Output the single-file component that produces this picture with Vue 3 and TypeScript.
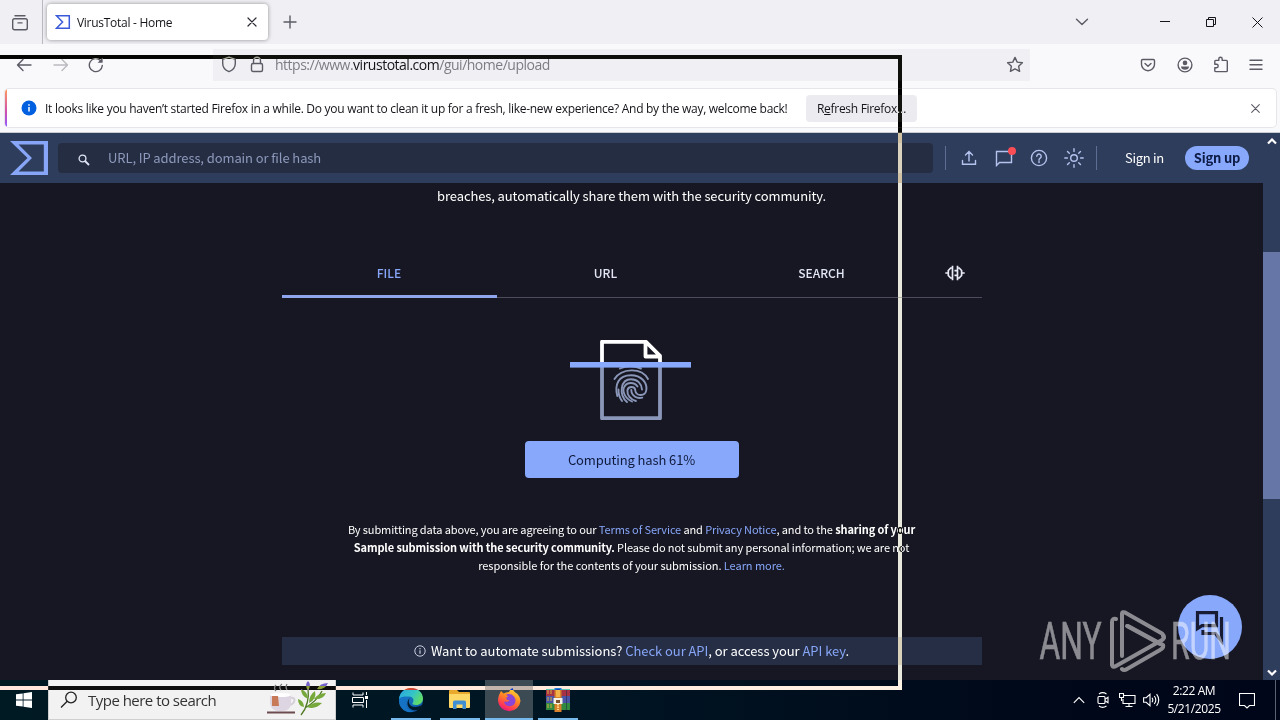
<script setup lang="ts">
interface TaskApp {
  id: string
  active: boolean
}

const tabs: string[] = ['FILE', 'URL', 'SEARCH']
const apps: TaskApp[] = [
  { id: 'edge', active: false },
  { id: 'files', active: false },
  { id: 'firefox', active: true },
  { id: 'winrar', active: false },
]
const progress = 61
</script>

<template>
  <div class="screen">
    <header class="titlebar">
      <div class="view-btn">
        <svg width="18" height="18" viewBox="0 0 18 18" class="line"><path d="M4 1.800h10M3.500 4.700h11a1.800 1.800 0 0 1 1.800 1.800v7.400a1.800 1.800 0 0 1-1.800 1.800h-11a1.800 1.800 0 0 1-1.800-1.800V6.500a1.800 1.800 0 0 1 1.800-1.800zM7 8.900h4" /></svg>
      </div>
      <div class="tab">
        <svg width="16" height="16" viewBox="0 0 16 16"><path d="M1.500 1.700h12.800v12.600H1.500L7.600 8z" fill="none" stroke="#3a5bd9" stroke-width="1.500" /></svg>
        <span class="tab-title">VirusTotal - Home</span>
        <svg class="line tab-close" width="10" height="10" viewBox="0 0 10 10"><path d="M1 1l8 8M9 1L1 9" /></svg>
      </div>
      <svg class="line plus" width="14" height="14" viewBox="0 0 14 14"><path d="M7 1v12M1 7h12" /></svg>
      <div class="window-controls">
        <svg class="line" width="14" height="8" viewBox="0 0 14 8"><path d="M1.500 1.200L7 6.500l5.500-5.300" /></svg>
        <svg class="sharp" width="10" height="10" viewBox="0 0 10 10"><path d="M0 4.500h10" /></svg>
        <svg class="sharp" width="10" height="10" viewBox="0 0 10 10"><path d="M.5 2.500h7v7h-7zM2.500 2.500v-2h7v7h-2" /></svg>
        <svg class="sharp" width="11" height="11" viewBox="0 0 11 11"><path d="M.5.5l10 10M10.500.5l-10 10" /></svg>
      </div>
    </header>

    <div class="toolbar">
      <svg class="line back" width="16" height="14" viewBox="0 0 16 14"><path d="M15 7H1.500M7 1.500L1.500 7 7 12.500" /></svg>
      <svg class="line forward" width="16" height="14" viewBox="0 0 16 14"><path d="M1 7h13.500M9 1.500L14.500 7 9 12.500" /></svg>
      <svg class="line reload" width="16" height="16" viewBox="0 0 16 16"><path d="M14.300 8.500A6.500 6.500 0 1 1 12.400 3.500" /><path d="M14.600 .8v5H9.600z" fill="#5b5b66" stroke="none" /></svg>
      <div class="address">
        <svg class="line" width="16" height="17" viewBox="0 0 16 17"><path d="M8 1.200L14.300 3.400v4.100c0 3.800-2.300 6.600-6.300 8.200C4 14.100 1.700 11.300 1.700 7.500V3.400z" /></svg>
        <svg class="line lock" width="14" height="17" viewBox="0 0 14 17"><rect x="1.500" y="7.500" width="11" height="8" rx="1.500" /><path d="M3.500 7.500V4.700a3.500 3.500 0 0 1 7 0v2.800" /></svg>
        <span class="url">https://www.<b>virustotal.com</b>/gui/home/upload</span>
        <svg class="line star" width="18" height="17" viewBox="0 0 18 17"><path d="M9 1.400l2.200 4.700 5.200.6-3.800 3.500 1 5.100L9 12.800l-4.600 2.500 1-5.100L1.600 6.700l5.200-.6z" /></svg>
      </div>
      <div class="tool-icons">
        <svg class="line" width="16" height="16" viewBox="0 0 16 16"><path d="M2.700 2.500h10.600a1.200 1.200 0 0 1 1.200 1.200v3.500a6.500 6.500 0 0 1-13 0V3.700a1.200 1.200 0 0 1 1.200-1.200zM5 6.500l3 2.800 3-2.800" /></svg>
        <svg class="line" width="16" height="16" viewBox="0 0 16 16"><circle cx="8" cy="8" r="6.900" /><circle cx="8" cy="5.900" r="2.300" fill="#5b5b66" stroke="none" /><path d="M4 9.500h8c0 2.300-1.800 3.300-4 3.300s-4-1-4-3.300z" fill="#5b5b66" stroke="none" /></svg>
        <svg class="line" width="16" height="17" viewBox="0 0 16 17"><path d="M1.800 6V5.200q0-.8.8-.8h3.200V3a1.700 1.700 0 0 1 3.400 0v1.400h4.200q.9 0 .9.900v9.400q0 .9-.9.900H2.700q-.9 0-.9-.9v-3h1.700a1.700 1.700 0 0 0 0-3.400H1.800z" /></svg>
        <svg class="line" width="14" height="12" viewBox="0 0 14 12"><path d="M1 1.300h12M1 5.800h12M1 10.300h12" /></svg>
      </div>
    </div>

    <div class="notice-strip">
      <div class="notice">
        <svg class="info" width="16" height="16" viewBox="0 0 16 16"><circle cx="8" cy="8" r="7.500" fill="#0060df" /><path d="M8 7v4.500M8 4.200v1.500" stroke="#fff" stroke-width="1.500" /></svg>
        <span class="notice-text">It looks like you haven’t started Firefox in a while. Do you want to clean it up for a fresh, like-new experience? And by the way, welcome back!</span>
        <button class="refresh" type="button">R<u>e</u>fresh Firefox…</button>
        <svg class="line notice-close" width="9" height="9" viewBox="0 0 9 9"><path d="M.7.7l7.600 7.600M8.300.7L.7 8.300" /></svg>
      </div>
    </div>

    <div class="viewport">
      <main class="page">
        <nav class="nav">
          <svg class="logo" width="38" height="34" viewBox="0 0 38 34"><path fill-rule="evenodd" d="M0 0H38V34H0L17.500 17zM8.500 3.500L22 17 8.500 30.500H33.800V3.500z" fill="#87a6f8" /></svg>
          <div class="search">
            <svg width="12" height="12" viewBox="0 0 12 12"><circle cx="4.500" cy="4.500" r="3.400" fill="none" stroke="#dfe5f5" stroke-width="1.300" /><path d="M7 7l4 4" stroke="#dfe5f5" stroke-width="1.800" /></svg>
            <span class="search-hint">URL, IP address, domain or file hash</span>
          </div>
          <div class="nav-actions">
            <svg width="16" height="16" viewBox="0 0 16 16"><path d="M8 11V2M4.500 5L8 1.600 11.500 5M1.500 10.500v3.700h13v-3.700" /></svg>
            <span class="chat">
              <svg width="18" height="17" viewBox="0 0 18 17"><path d="M1.500 1.500h15v11H4.500l-3 3z" /></svg>
              <i class="dot"></i>
            </span>
            <svg width="18" height="18" viewBox="0 0 18 18"><circle cx="9" cy="9" r="7.600" /><path d="M6.800 7.200a2.200 2.200 0 1 1 3.400 1.900q-1.200.8-1.200 1.900M9 12.200v1.400" /></svg>
            <svg width="20" height="20" viewBox="0 0 20 20"><circle cx="10" cy="10" r="3.300" /><path d="M10 .8v2.600M10 16.600v2.600M.8 10h2.600M16.600 10h2.600M3.500 3.500l1.800 1.800M14.700 14.700l1.800 1.800M3.500 16.500l1.800-1.800M14.700 5.300l1.800-1.800" /></svg>
          </div>
          <a class="sign-in">Sign in</a>
          <a class="sign-up"><span>Sign up</span></a>
        </nav>

        <section class="content">
          <p class="tagline">breaches, automatically share them with the security community.</p>

          <div class="tabs">
            <div v-for="(t, i) in tabs" :key="t" class="tab-item" :class="{ selected: i === 0 }">{{ t }}</div>
            <div class="tab-icon">
              <svg width="20" height="16" viewBox="0 0 20 16"><path d="M7.500 .8v14.400M7 3H5.700L3.300 5.500v5L5.700 13H7M.3 8h3M12.500 .8v14.400M12.500 3h1.700l2.400 2.500v5L14.200 13h-1.700M16.700 8h3M9.500 5.700h3M9.500 10.300h3" /></svg>
            </div>
          </div>

          <svg class="scan" width="122" height="80" viewBox="0 0 122 80" fill="none">
            <path d="M32 24V78.200H90V24" stroke="#8a97b8" stroke-width="3.800" stroke-linejoin="round" />
            <path d="M32 24V1.800H76L90 15.800V24M75.500 1.800V16.500H90" stroke="#fff" stroke-width="3.800" stroke-linejoin="round" />
            <g stroke="#8a97b8" stroke-width="1.900" stroke-linecap="round">
              <path d="M50 28.500c6-2.600 14-2.600 21 0" />
              <path d="M44.500 39c7-11 27-12 33.500 0" />
              <path d="M47.300 56C44.500 45 48 35.200 61 35.200c10.500 0 16 7.300 15.400 14.300-.7 7.300-10.700 7.300-11.200.5-.2-4-7-4.300-7.800.3-.5 4.700 3.200 9.200 8.500 10.700" />
              <path d="M57 62C48.500 54.500 50.500 39.200 61 39.200c6.500 0 10.500 4.500 11 10.300" />
              <path d="M61.300 50c0 5.500 5.500 9.200 11 7.600" />
              <path d="M62 61.500C54 58 52 50 54.500 46.500c2.500-4.600 10-4.800 13 0" />
              <path d="M52 61c-2.500-3.500-3.800-7-3.500-11.500" />
            </g>
            <rect x="0" y="22" width="121" height="5.600" fill="#87a8fb" />
          </svg>

          <button class="compute" type="button">Computing hash {{ progress }}%</button>

          <div class="legal">
            <p class="l1">By submitting data above, you are agreeing to our <a>Terms of Service</a> and <a>Privacy Notice</a>, and to the <b>sharing of your</b></p>
            <p class="l2"><b>Sample submission with the security community.</b> Please do not submit any personal information; we are not</p>
            <p class="l3">responsible for the contents of your submission. <a>Learn more.</a></p>
          </div>

          <div class="api">
            <svg width="12" height="12" viewBox="0 0 12 12"><circle cx="6" cy="6" r="5.200" fill="none" stroke="#c8cede" /><path d="M6 5.200v3.600M6 3v1.200" stroke="#c8cede" stroke-width="1.200" /></svg>
            <span class="api-text">Want to automate submissions? <a>Check our API</a>, or access your <a>API key</a>.</span>
          </div>
        </section>
      </main>
      <aside class="scrollbar">
        <svg width="10" height="7" viewBox="0 0 10 7"><path d="M1 5.500l4-4 4 4" /></svg>
        <div class="thumb"></div>
        <svg width="10" height="7" viewBox="0 0 10 7"><path d="M1 1.500l4 4 4-4" /></svg>
      </aside>
    </div>

    <footer class="taskbar">
      <div class="start">
        <svg width="16" height="16" viewBox="0 0 16 16"><path d="M0 2.300L6.700 1.400v6.200H0zM7.500 1.300L16 0v7.600H7.500zM0 8.400h6.700v6.200L0 13.700zM7.500 8.400H16V16l-8.500-1.300z" fill="#fff" /></svg>
      </div>
      <div class="task-search">
        <svg width="18" height="18" viewBox="0 0 18 18"><circle cx="11" cy="6.500" r="5.300" fill="none" stroke="#222" stroke-width="1.300" /><path d="M7.200 10.300L1 16.500" stroke="#222" stroke-width="1.300" /></svg>
        <span class="task-hint">Type here to search</span>
        <svg class="art" width="64" height="38" viewBox="0 0 64 38">
          <path d="M9 10q-3-3 0-6M14 9q-3-3 1-6M20 9q-2-3 0-6" stroke="#777" stroke-width="1.200" fill="none" />
          <path d="M23 17q6-1 4 4-2 3-5 3" fill="none" stroke="#d5cfda" stroke-width="2" />
          <path d="M3 14q10-2 21 0v9q-1 7-8 7h-5q-6 0-8-7z" fill="#ddd6e2" />
          <ellipse cx="13.500" cy="14" rx="10.500" ry="2" fill="#fff" />
          <path d="M5 15h6l1 10H5z" fill="#c87958" />
          <path d="M0 30.500h28v2H0z" fill="#6b4a50" />
          <path d="M34 34q9-11 7-27M38 27q12-7 17-17" fill="none" stroke="#507a25" stroke-width="1.300" />
          <path d="M37 26q-6-1-6-8 6 2 6 8zM41 18q-7-3-7-10 7 3 7 10zM42 22q0-8 6-12 2 8-6 12zM40 26q7-6 15-4-7 7-15 4zM47 18q4-6 12-6-3 7-12 6z" fill="#76a83b" />
          <path d="M41 9q-4-5 0-9 4 4 0 9zM50 8q3-6 11-6-3 7-11 6z" fill="#7460c8" />
        </svg>
      </div>
      <div class="task-view">
        <svg width="17" height="16" viewBox="0 0 17 16" fill="none" stroke="#fff"><path d="M1 .5v2.500h10V.5M1 15.500V13h10v2.500M.5 5.500h11v5H.5zM14.500 0v3M14.500 8v8" /><path d="M13 4h3v3h-3z" fill="#fff" stroke="none" /></svg>
      </div>
      <div class="apps">
        <div v-for="app in apps" :key="app.id" class="app" :class="{ active: app.active }">
          <svg v-if="app.id === 'edge'" width="26" height="26" viewBox="0 0 26 26">
            <defs>
              <linearGradient id="edgeTop" x1="0" y1="0" x2="1" y2=".5"><stop offset="0" stop-color="#2aa5df" /><stop offset=".6" stop-color="#35c4c8" /><stop offset="1" stop-color="#5fdb6a" /></linearGradient>
              <linearGradient id="edgeLow" x1="0" y1="0" x2="1" y2="1"><stop offset="0" stop-color="#1c8bd8" /><stop offset="1" stop-color="#0c4ea0" /></linearGradient>
            </defs>
            <circle cx="13" cy="13" r="12" fill="url(#edgeLow)" />
            <path d="M1 12C2 5 7 1 13 1c7 0 12 5 12 10.500 0 4-3 6.500-7 6.500-3 0-4-1-3.500-2 2-2 1-6.500-3.500-6.500C6 9.500 2 10 1 12z" fill="url(#edgeTop)" />
            <path d="M12 11c-3 4 0 9 5 9 3 0 6-1 7.500-2.500l.8 0-.8 3.500-3 1.500c-5 2-11 0-12-5-.3-3 .5-5 2.500-6.500z" fill="#001a2a" />
            <path d="M9.500 10.500C5 16 9 24.500 16 24.600c-8 2.500-15-3-15-11 1-3 5-5 8.500-3.100z" fill="#1672c4" />
          </svg>
          <svg v-else-if="app.id === 'files'" width="24" height="22" viewBox="0 0 24 22">
            <path d="M1 2q0-1 1-1h7l2 2h10q1 0 1 1v3H1z" fill="#e8a92c" />
            <path d="M1 5h21v13q0 1-1 1H2q-1 0-1-1z" fill="#ffd968" />
            <path d="M5 20v-7q0-1.500 1.500-1.500h10Q18 11.500 18 13v7h-3.500v-4.500h-6V20z" fill="#3f8fd2" />
          </svg>
          <svg v-else-if="app.id === 'firefox'" width="24" height="24" viewBox="0 0 24 24">
            <defs><linearGradient id="fox" x1=".8" y1="0" x2=".3" y2="1"><stop offset="0" stop-color="#ffdf3c" /><stop offset=".45" stop-color="#ff8a22" /><stop offset=".8" stop-color="#ff3a52" /><stop offset="1" stop-color="#e31587" /></linearGradient></defs>
            <path d="M2 7l2-4 2.500 2.500Q9 4 12 4q1-3 3.500-4 .5 3 3.500 5l1.500 1Q23.500 9 23.500 13A11.300 11.300 0 0 1 1 13q0-3.500 1-6z" fill="url(#fox)" />
            <path d="M9 6.500q5-1.500 8 2 3 4.500 0 8-3.500 3-7.500 1-3-2-2-4 3 1 5-1-3-.5-3.500-2.500.5-1 2-1.500-1-1-2-2z" fill="#8a45d6" />
          </svg>
          <svg v-else width="24" height="24" viewBox="0 0 24 24">
            <path d="M0 1h24v7H0z" fill="#a63245" /><path d="M0 8h24v7H0z" fill="#4a55a8" /><path d="M0 15h24v7H0z" fill="#318a42" />
            <path d="M2 2v20M5 2v20" stroke="#d6b13c" stroke-width="1" stroke-dasharray="4 3" /><path d="M20.500 2v20" stroke="#1c2440" stroke-opacity=".5" />
            <path d="M8.500 0h7v24h-7z" fill="#d9822b" /><path d="M10 1h4v8h-4z" fill="#f2b34a" />
            <path d="M7.500 10h9v6h-9z" fill="#f4f1e6" /><path d="M10 12h4v3h-4z" fill="#7a5230" /><path d="M12 16v6" stroke="#ffd98a" stroke-width="2" stroke-dasharray="1.500 1" />
          </svg>
        </div>
      </div>
      <div class="tray">
        <svg width="12" height="8" viewBox="0 0 12 8"><path d="M.8 6.800L6 1.600l5.200 5.200" /></svg>
        <svg width="12" height="16" viewBox="0 0 12 16"><rect x="1" y="4.500" width="7" height="7" rx="1" /><path d="M8 7.300l3-2v5.400l-3-2M2 2Q5.500-.7 9.500 2M2 14q3.500 2.700 7.500 0" /></svg>
        <svg width="17" height="15" viewBox="0 0 17 15"><path d="M5 2.500h11v8H4V6M10 10.500V13M6.500 13.500h7M.5.5h4v4h-4zM2.500 4.500V8" /></svg>
        <svg width="17" height="14" viewBox="0 0 17 14"><path d="M.6 4.700h2.600L7 1.300v11.400L3.200 9.300H.6zM9 4.800q1.600 2.200 0 4.400M11.300 3q3 4 0 8M13.600 1.200q4.300 5.800 0 11.600" /></svg>
        <div class="clock"><span class="time">2:22 AM</span><span class="date">5/21/2025</span></div>
        <svg width="16" height="16" viewBox="0 0 16 16"><path d="M.5.5h15v12h-5L8 15l-2.500-2.500h-5z" /></svg>
        <i class="desktop-edge"></i>
      </div>
    </footer>

    <div class="fab">
      <svg width="32" height="36" viewBox="0 0 32 36"><path d="M3.500 3.700h19v13H8L3.500 19.500zM27.500 8v24l-6-7.500H9V21" fill="none" stroke="#171b33" stroke-width="3.200" /></svg>
    </div>

    <svg class="watermark" width="204" height="64" viewBox="0 0 204 64">
      <text x="0.500" y="50" textLength="62" lengthAdjust="spacingAndGlyphs">ANY</text>
      <g fill="none" stroke="#fff" stroke-width="4" stroke-linejoin="round" stroke-linecap="round">
        <path d="M83 47V4.500q0-2 3-1L123 24.500q2 2 2 4" />
        <path d="M88 17l33 18M77 10q-4-1-4 3v43q1 3 4 1l46-26q3-2 1-4" />
        <path d="M83 60q2 2 5 0l33-19q4-2 3-5L89 17" />
      </g>
      <text x="132" y="50" textLength="60" lengthAdjust="spacingAndGlyphs">RUN</text>
    </svg>

    <div class="drag-frame"></div>
  </div>
</template>

<style>
html,
body {
  margin: 0;
  overflow: hidden;
}
</style>

<style scoped>
.screen {
  position: relative;
  width: 1280px;
  height: 720px;
  overflow: hidden;
  display: flex;
  flex-direction: column;
  isolation: isolate;
  background: #171723;
  font-family: "Open Sans", "Noto Sans", sans-serif;
  color: #15141a;
}
.screen * { box-sizing: border-box; }
svg { flex: none; display: block; }
p { margin: 0; }
button { border: 0; padding: 0; font-family: inherit; color: inherit; }
.line { fill: none; stroke: #5b5b66; stroke-width: 1.4; stroke-linecap: round; stroke-linejoin: round; }
.sharp { fill: none; stroke: #15141a; stroke-width: 1; }

.titlebar { height: 44px; flex: none; display: flex; background: #f0f0f4; }
.view-btn { width: 43px; height: 44px; padding: 14px 0 0 11px; border-right: 1px solid #b9b9c2; }
.tab {
  width: 221px;
  height: 36px;
  margin: 4px 0 0 4px;
  padding: 0 11px 0 8px;
  display: flex;
  align-items: center;
  background: #fff;
  border-radius: 4px;
  box-shadow: 0 0 4px rgba(0, 0, 0, 0.4);
}
.tab-title { margin-left: 6px; font-size: 12px; letter-spacing: -0.28px; white-space: nowrap; }
.tab-close { margin-left: auto; stroke: #2b2a33; stroke-width: 1.2; }
.plus { margin: 15px 0 0 15px; }
.window-controls { margin-left: auto; padding: 0 17px 0 0; display: flex; align-items: center; }
.window-controls svg:nth-child(2) { margin-left: 71px; }
.window-controls svg:nth-child(3) { margin-left: 36px; }
.window-controls svg:nth-child(4) { margin-left: 36px; }

.toolbar { height: 44px; flex: none; display: flex; align-items: center; padding-bottom: 3px; background: #f9f9fb; }
.back { margin-left: 16px; }
.forward { margin-left: 21px; opacity: 0.4; }
.reload { margin-left: 19px; }
.address {
  width: 817px;
  height: 32px;
  margin: 0 0 0 109px;
  padding: 0 6px 0 8px;
  display: flex;
  align-items: center;
  background: #f0f0f4;
}
.lock { margin-left: 13px; }
.url { margin-left: 11px; font-size: 14px; letter-spacing: -0.49px; color: #7c7c85; white-space: nowrap; }
.url b { font-weight: 400; color: #15141a; }
.star { margin-left: auto; }
.tool-icons { margin-left: auto; padding-right: 17px; display: flex; align-items: center; gap: 20px; }
.tool-icons svg:first-child { margin-right: 1px; }

.notice-strip { height: 45px; flex: none; padding: 1px 4px 6px 5px; background: #f9f9fb; border-bottom: 1px solid #c9cbd2; }
.notice {
  position: relative;
  height: 38px;
  display: flex;
  align-items: center;
  padding: 0 16px 0 16px;
  border-radius: 4px;
  overflow: hidden;
  background: #fff;
  box-shadow: 0 0 0 1px #e6e6ea;
}
.notice-strip .notice::before {
  content: "";
  position: absolute;
  left: 0;
  top: 0;
  width: 2px;
  height: 38px;
  background: linear-gradient(#ff9a5c, #d04fb0 60%, #9059ff);
}
.notice-text { width: 742px; margin-left: 8px; font-size: 12px; letter-spacing: -0.279px; white-space: nowrap; }
.refresh { width: 111px; height: 27px; margin-left: 19px; background: #ececf0; border-radius: 4px; font-size: 12px; letter-spacing: -0.3px; white-space: nowrap; }
.notice-close { margin-left: auto; stroke-width: 1.1; }

.viewport { flex: 1; min-height: 0; display: flex; font-family: "Noto Sans CJK SC", "Noto Sans", sans-serif; color: #fff; }
.page { width: 1263px; flex: none; display: flex; flex-direction: column; }
.nav { height: 50px; flex: none; display: flex; align-items: center; padding-left: 10px; background: #2f3d5c; white-space: nowrap; }
.search { width: 875px; height: 30px; margin-left: 10px; padding-left: 20px; display: flex; align-items: center; background: #252d43; border-radius: 4px; }
.search svg { margin-top: 3px; }
.search-hint { margin-left: 18px; font-size: 13px; letter-spacing: -0.1px; line-height: 20px; color: #8e9abb; }
.nav-actions {
  width: 152px;
  height: 24px;
  margin-left: 12px;
  padding-left: 15px;
  display: flex;
  align-items: center;
  gap: 17px;
  border-left: 1px solid #5d6d94;
  border-right: 1px solid #5d6d94;
}
.nav-actions svg { fill: none; stroke: #b3c3ee; stroke-width: 1.4; stroke-linecap: round; }
.nav-actions > svg:last-child { margin-left: -1px; }
.chat { position: relative; width: 18px; margin-left: 1px; }
.dot { position: absolute; right: -3px; top: -3px; width: 8px; height: 8px; border-radius: 50%; background: #fb4d55; }
.nav-actions .chat svg { margin: 0; }
.sign-in { width: 40px; margin-left: 28px; font-size: 13px; letter-spacing: -0.3px; line-height: 20px; }
.sign-up { width: 64px; height: 24px; margin-left: 20px; border-radius: 12px; background: #87a8fb; color: #0e1b46; font-size: 13px; font-weight: 700; letter-spacing: -0.2px; line-height: 23px; text-align: center; }

.content { flex: 1; min-height: 0; padding-top: 3px; display: flex; flex-direction: column; align-items: center; background: #171723; }
.tagline { font-size: 13px; letter-spacing: -0.1px; line-height: 20px; white-space: nowrap; }
.tabs { width: 700px; height: 48px; margin-top: 44px; display: flex; border-bottom: 1px solid #4d4b5c; }
.tab-item { width: 216px; height: 48px; padding: 13px 0 0 0; text-align: center; font-size: 12px; font-weight: 500; line-height: 20px; color: #e2e6f5; }
.tab-item.selected { width: 215px; margin-right: 1px; color: #87a6f8; border-bottom: 3px solid #8fa6ee; }
.tab-icon { padding: 15px 0 0 15px; }
.tab-icon svg { fill: none; stroke: #e8ebf5; stroke-width: 1.7; }
.scan { margin: 42px 1px 0 0; }
.compute { width: 214px; height: 37px; flex: none; margin-top: 21px; border-radius: 4px; background: #87a8fb; color: #101a3c; font-size: 13px; letter-spacing: -0.12px; line-height: 37px; }
.legal { margin-top: 42px; font-size: 11px; letter-spacing: -0.113px; line-height: 18px; text-align: center; white-space: nowrap; }
.l3 { letter-spacing: -0.05px; }
a { color: #87a6f8; }
.sign-in { color: #fff; }
.sign-up { color: #0e1b46; }
.api { width: 700px; height: 28px; margin-top: 63px; display: flex; align-items: center; justify-content: center; gap: 5px; background: #262e45; font-size: 13px; letter-spacing: -0.05px; line-height: 20px; white-space: nowrap; }

.scrollbar { width: 17px; display: flex; flex-direction: column; align-items: center; padding: 5px 0 4px; background: #2f3d5c; }
.scrollbar svg { fill: none; stroke: #fff; stroke-width: 2.2; }
.thumb { width: 17px; height: 247px; margin: 107px 0 auto; background: #6676a6; }

.taskbar { height: 40px; flex: none; display: flex; background: linear-gradient(90deg, #001a24, #001523 45%, #000718 85%, #00061a); color: #fff; }
.start { width: 48px; padding: 12px 0 0 16px; }
.task-search { width: 288px; height: 40px; padding: 0 4px 0 11px; display: flex; align-items: center; background: #f2f2f2; border: 1px solid #cfcfcf; border-top: 0; color: #333; }
.task-hint { margin-left: 10px; font-size: 15px; letter-spacing: -0.52px; white-space: nowrap; }
.art { margin-left: auto; }
.task-view { width: 51px; padding: 12px 0 0 16px; }
.apps { display: flex; }
.app { width: 40px; height: 40px; margin: 0 5px 0 4px; display: flex; align-items: center; justify-content: center; border-bottom: 2px solid #76b9ed; padding-top: 2px; }
.app.active { width: 48px; margin: 0 1px 0 0; background: #3c4a54; }
.tray { margin-left: auto; display: flex; align-items: center; }
.tray svg { fill: none; stroke: #fff; stroke-width: 1.1; margin-right: 10px; }
.tray svg:nth-child(2) { margin-left: 2px; }
.tray svg:nth-child(3) { margin-right: 7px; }
.tray svg:nth-child(4) { margin-right: 6px; }
.clock { width: 56px; display: flex; flex-direction: column; align-items: center; font-size: 12px; line-height: 18px; letter-spacing: -0.4px; margin-right: 17px; white-space: nowrap; }
.tray svg:nth-child(6) { margin: 2px 20px 0 0; }
.desktop-edge { width: 1px; height: 40px; margin-right: 4px; background: #5a6270; }

.fab { position: absolute; left: 1178px; top: 595px; width: 64px; height: 64px; border-radius: 50%; background: #87a8fb; display: flex; align-items: center; justify-content: center; }
.watermark { position: absolute; left: 1039px; top: 609px; opacity: 0.5; }
.watermark text { font: 400 52px Roboto, "Liberation Sans", sans-serif; fill: #fff; stroke: #fff; stroke-width: 0.6px; }
.drag-frame { position: absolute; left: -10px; top: 55px; width: 912px; height: 635px; border: 4px solid #fff; mix-blend-mode: difference; pointer-events: none; }
</style>
